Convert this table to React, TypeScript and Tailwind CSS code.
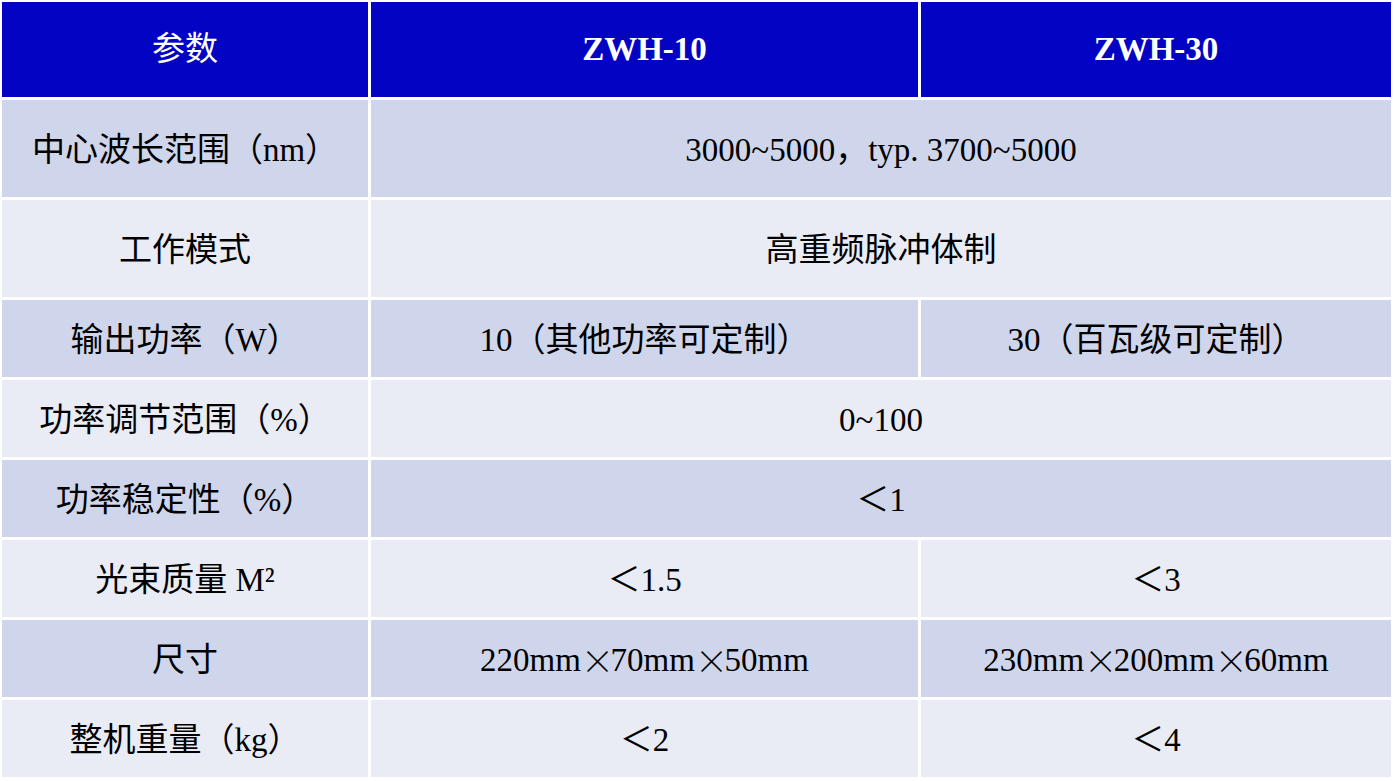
const font = { fontFamily: '"Liberation Serif", "Noto Sans CJK SC", serif' }

type Row = { label: React.ReactNode; a: React.ReactNode; b?: React.ReactNode }

// fullwidth multiply sign, as in the source doc
const Times = () => (
  <span className="inline-block w-[0.9em] text-center font-light leading-none [font-family:'Noto_Sans_CJK_SC',sans-serif]">
    ×
  </span>
)

const rows: Row[] = [
  { label: '中心波长范围（nm）', a: '3000~5000，typ. 3700~5000' },
  { label: '工作模式', a: '高重频脉冲体制' },
  { label: '输出功率（W）', a: '10（其他功率可定制）', b: '30（百瓦级可定制）' },
  { label: '功率调节范围（%）', a: '0~100' },
  { label: '功率稳定性（%）', a: '＜1' },
  { label: '光束质量 M²', a: '＜1.5', b: '＜3' },
  {
    label: '尺寸',
    a: (
      <>
        220mm<Times />70mm<Times />50mm
      </>
    ),
    b: (
      <>
        230mm<Times />200mm<Times />60mm
      </>
    ),
  },
  { label: '整机重量（kg）', a: '＜2', b: '＜4' },
]

export default function App() {
  return (
    <div className="w-[1394px] h-[781px] bg-white p-[2px] overflow-hidden" style={font}>
      <div className="grid grid-cols-[366px_547px_470px] grid-rows-[95px_97px_97px_repeat(6,77px)] gap-[3px] text-[33px] leading-none text-black">
        {/* header */}
        <div className="bg-[#0303c4] text-white flex items-center justify-center">参数</div>
        <div className="bg-[#0303c4] text-white font-bold flex items-center justify-center">ZWH-10</div>
        <div className="bg-[#0303c4] text-white font-bold flex items-center justify-center">ZWH-30</div>

        {rows.map((r, i) => {
          const bg = i % 2 === 0 ? 'bg-[#cfd5ea]' : 'bg-[#e9ebf5]'
          return (
            <div key={i} className="contents">
              <div className={`${bg} flex items-center justify-center pt-[3px]`}>{r.label}</div>
              {r.b === undefined ? (
                <div className={`${bg} col-span-2 flex items-center justify-center pt-[3px]`}>{r.a}</div>
              ) : (
                <>
                  <div className={`${bg} flex items-center justify-center pt-[3px]`}>{r.a}</div>
                  <div className={`${bg} flex items-center justify-center pt-[3px]`}>{r.b}</div>
                </>
              )}
            </div>
          )
        })}
      </div>
    </div>
  )
}
